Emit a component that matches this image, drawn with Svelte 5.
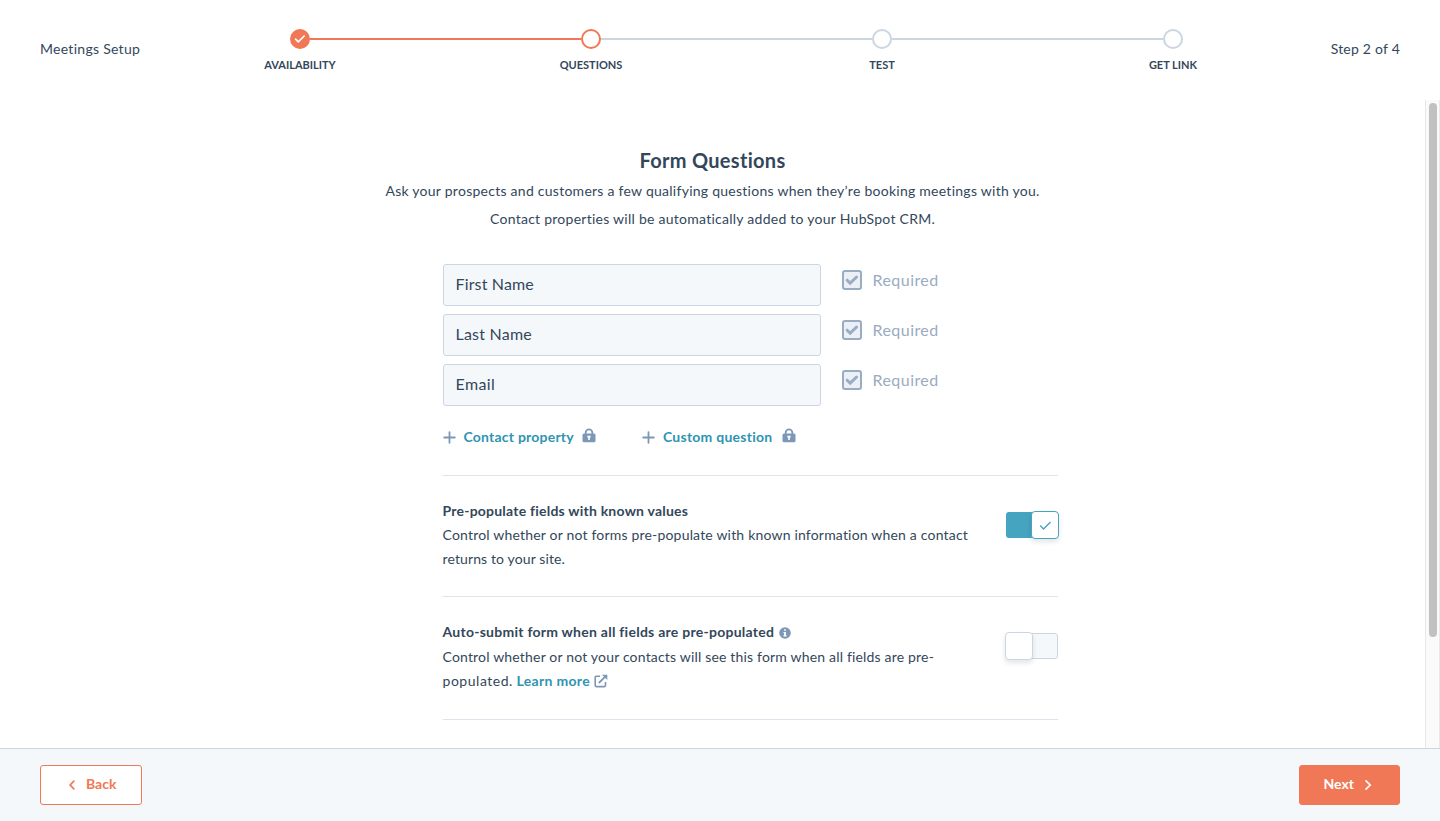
<script>
  const steps = [
    { label: 'AVAILABILITY', state: 'done' },
    { label: 'QUESTIONS', state: 'current' },
    { label: 'TEST', state: 'todo' },
    { label: 'GET LINK', state: 'todo' }
  ];
  const fields = [
    { name: 'First Name', cls: 'f1' },
    { name: 'Last Name', cls: 'f2' },
    { name: 'Email', cls: 'f3' }
  ];
</script>

{#snippet lock()}
  <svg class="lock" width="14" height="15" viewBox="0 0 14 15"><path d="M3.7 6V4.6a3.3 3.3 0 0 1 6.6 0V6" fill="none" stroke="#7c98b6" stroke-width="1.8" /><rect x="0.5" y="5.6" width="13" height="8.6" rx="1.5" fill="#7c98b6" /><path d="M5.4 7.7h3.2v1.8h-.8v2.5H6.2V9.5h-.8z" fill="#fff" /></svg>
{/snippet}
{#snippet plus()}
  <svg width="13" height="13" viewBox="0 0 13 13"><path d="M6.5 1.2v10.6M1.2 6.5h10.6" stroke="#7c98b6" stroke-width="1.8" stroke-linecap="round" /></svg>
{/snippet}

<div class="page">
  <header>
    <span class="title">Meetings Setup</span>
    <ol class="stepper">
      {#each steps as s}
        <li class={s.state}>
          <div class="track">
            <i class="line before"></i>
            <span class="dot">
              {#if s.state === 'done'}
                <svg width="12" height="10" viewBox="0 0 12 10"><path d="M1.6 5.2l2.7 2.6L10.2 2" fill="none" stroke="#fff" stroke-width="1.7" stroke-linecap="round" stroke-linejoin="round" /></svg>
              {/if}
            </span>
            <i class="line after"></i>
          </div>
          <span class="label">{s.label}</span>
        </li>
      {/each}
    </ol>
    <span class="count">Step 2 of 4</span>
  </header>

  <div class="body">
    <main>
      <h1>Form Questions</h1>
      <p class="intro">Ask your prospects and customers a few qualifying questions when they’re booking meetings with you.<br />Contact properties will be automatically added to your HubSpot CRM.</p>
      <section class="form">
        {#each fields as f}
          <div class="field">
            <div class="input"><span class={f.cls}>{f.name}</span></div>
            <span class="check"><svg width="14" height="12" viewBox="0 0 14 12"><path d="M2.2 6.2l3 3L11.6 3" fill="none" stroke="#99acc2" stroke-width="3" stroke-linecap="round" /></svg></span>
            <span class="required">Required</span>
          </div>
        {/each}
        <div class="adders">
          <span class="add">{@render plus()}<span class="text">Contact property</span>{@render lock()}</span>
          <span class="add">{@render plus()}<span class="text wide">Custom question</span>{@render lock()}</span>
        </div>
        <div class="setting first">
          <div class="copy">
            <h2>Pre-populate fields with known values</h2>
            <p><span class="c1">Control whether or not forms pre-populate with known information when a contact</span><br /><span class="c2">returns to your site.</span></p>
          </div>
          <div class="toggle on"><span class="knob"><svg width="13" height="11" viewBox="0 0 13 11"><path d="M1.2 5.5L4.5 8.9 11.5 2" fill="none" stroke="#45a4bf" stroke-width="1.4" /></svg></span></div>
        </div>
        <div class="setting second">
          <div class="copy">
            <h2><span class="h2b">Auto-submit form when all fields are pre-populated</span><svg class="info" width="12" height="12" viewBox="0 0 12 12"><circle cx="6" cy="6" r="5.8" fill="#7c98b6" /><path d="M5.1 2.2h1.8v1.6H5.1zM4.5 4.9h2.4v3.4h.7v1.2H4.5V8.3h.6V6.1h-.6z" fill="#fff" /></svg></h2>
            <p><span class="c3">Control whether or not your contacts will see this form when all fields are pre-</span><br /><span class="c4">populated.</span> <span class="more">Learn more</span><svg class="ext" width="14" height="14" viewBox="0 0 14 14"><path d="M6 2.3H2.2a1 1 0 0 0-1 1v8.3a1 1 0 0 0 1 1h8.3a1 1 0 0 0 1-1V8" fill="none" stroke="#7c98b6" stroke-width="1.6" /><path d="M4.8 9L11 2.8" stroke="#7c98b6" stroke-width="1.8" /><path d="M8 .7h5.3V6z" fill="#7c98b6" /></svg></p>
          </div>
          <div class="toggle off"><span class="knob"></span></div>
        </div>
      </section>
    </main>
    <div class="scrollbar"><i></i></div>
  </div>

  <footer>
    <button class="back"><svg width="8" height="10" viewBox="0 0 8 10"><path d="M5.8 1.2L2.2 5l3.6 3.8" fill="none" stroke="#f07856" stroke-width="1.7" stroke-linecap="round" /></svg><span>Back</span></button>
    <button class="next"><span>Next</span><svg width="8" height="12" viewBox="0 0 8 12"><path d="M2 1.8L6.2 6 2 10.2" fill="none" stroke="#fff" stroke-width="1.7" stroke-linecap="round" /></svg></button>
  </footer>
</div>

<style>
  :global(body) { margin: 0; }
  .page { width: 1440px; height: 821px; display: flex; flex-direction: column; overflow: hidden; background: #fff; color: #33475b; font-family: Lato, sans-serif; font-size: 14px; font-variant-ligatures: none; }
  header { height: 100px; flex: none; display: flex; box-sizing: border-box; padding: 0 40px; }
  .title, .count { line-height: 98px; white-space: nowrap; }
  .title { width: 114.5px; flex: none; letter-spacing: .28px; }
  .count { margin-left: auto; letter-spacing: .22px; }
  .stepper { list-style: none; margin: 29px 0 0; padding: 0; display: flex; }
  .stepper li { width: 291px; display: flex; flex-direction: column; align-items: center; }
  .track { display: flex; align-items: center; width: 100%; }
  .line { flex: 1; height: 2px; background: #cbd6e2; }
  .dot { width: 20px; height: 20px; box-sizing: border-box; border: 2px solid #cbd6e2; border-radius: 50%; display: flex; align-items: center; justify-content: center; }
  .done .dot { background: #f07856; }
  .current .dot, .done .dot { border-color: #f07856; }
  .done .line, .current .before { background: #f07856; }
  li:first-child .before, li:last-child .after { background: transparent; }
  .label { font-size: 11px; line-height: 16px; margin-top: 8px; font-weight: 700; }
  .body { flex: 1; display: flex; min-height: 0; }
  main { flex: 1; overflow: hidden; }
  h1 { margin: 46px 0 0; font-size: 20px; line-height: 28px; font-weight: 700; text-align: center; letter-spacing: .3px; }
  .intro { margin: 3px 0 0; line-height: 28px; text-align: center; letter-spacing: .26px; }
  .form { width: 615px; margin: 31px 0 0 443px; }
  .field { display: flex; height: 42px; margin-bottom: 8px; }
  .input { width: 378px; box-sizing: border-box; border: 1px solid #cbd6e2; border-radius: 3px; background: #f5f8fa; padding-left: 11.5px; font-size: 16px; line-height: 38px; }
  .f1 { letter-spacing: .15px; }
  .f2 { letter-spacing: .22px; }
  .f3 { letter-spacing: .4px; }
  .check { width: 20px; height: 20px; box-sizing: border-box; border: 2px solid #99acc2; border-radius: 3px; background: #eaf0f6; margin: 6px 10.5px 0 21px; display: flex; align-items: center; justify-content: center; }
  .required { color: #99acc2; font-size: 16px; line-height: 32px; letter-spacing: .45px; }
  .adders { display: flex; gap: 46px; height: 61px; }
  .add { display: flex; align-items: center; height: 46px; color: #2e94b2; font-weight: 700; letter-spacing: .22px; }
  .add .text { margin: 0 8.5px 2px 7.5px; }
  .add .wide { letter-spacing: .26px; margin-right: 9px; }
  .lock { margin-bottom: 3px; }
  .setting { border-top: 1px solid #dfe3eb; display: flex; justify-content: space-between; }
  .first { height: 120px; }
  .second { height: 122px; border-bottom: 1px solid #dfe3eb; }
  .copy { margin-left: -.5px; }
  h2 { margin: 23px 0 0; font-size: 14px; line-height: 24px; font-weight: 700; letter-spacing: .22px; }
  .h2b { letter-spacing: .26px; }
  .copy p { margin: 0; line-height: 24px; white-space: nowrap; }
  .second p { margin-top: 1px; }
  .c1 { letter-spacing: .19px; }
  .c2 { letter-spacing: .12px; }
  .c3 { letter-spacing: .18px; }
  .c4 { letter-spacing: .53px; }
  .more { color: #2e94b2; font-weight: 700; letter-spacing: .32px; }
  .info { margin-left: 4.5px; vertical-align: -2px; }
  .ext { margin-left: 3.5px; vertical-align: -2px; }
  .toggle { width: 52px; height: 26px; border-radius: 3px; margin-top: 36px; box-sizing: border-box; display: flex; align-items: center; }
  .knob { width: 28px; height: 28px; flex: none; box-sizing: border-box; border-radius: 4px; background: #fff; border: 1px solid #cbd6e2; box-shadow: 0 3px 5px rgba(0,0,0,.1); display: flex; align-items: center; justify-content: center; }
  .on { background: #45a4bf; justify-content: flex-end; }
  .on .knob { border-color: #45a4bf; margin-right: -1px; }
  .off { background: #f5f8fa; border: 1px solid #cbd6e2; }
  .off .knob { margin-left: -2px; }
  .scrollbar { width: 15px; box-sizing: border-box; background: #fafafa; border: solid #e8e8e8; border-width: 0 1px; padding: 3px 2px 0 3px; }
  .scrollbar i { display: block; width: 8px; height: 534px; border-radius: 4px; background: #c1c1c1; }
  footer { height: 73px; flex: none; box-sizing: border-box; border-top: 1px solid #cbd6e2; background: #f5f8fa; display: flex; justify-content: space-between; padding: 16px 40px 0; }
  button { height: 40px; box-sizing: border-box; border: 1px solid #f07856; border-radius: 3px; font: 700 14px Lato, sans-serif; display: flex; align-items: center; padding: 0; }
  button span { margin-bottom: 3px; }
  .back { width: 102px; background: #fff; color: #f07856; padding-left: 27px; gap: 10px; }
  .next { width: 101px; background: #f07856; color: #fff; padding-left: 23.5px; gap: 10px; }
</style>
